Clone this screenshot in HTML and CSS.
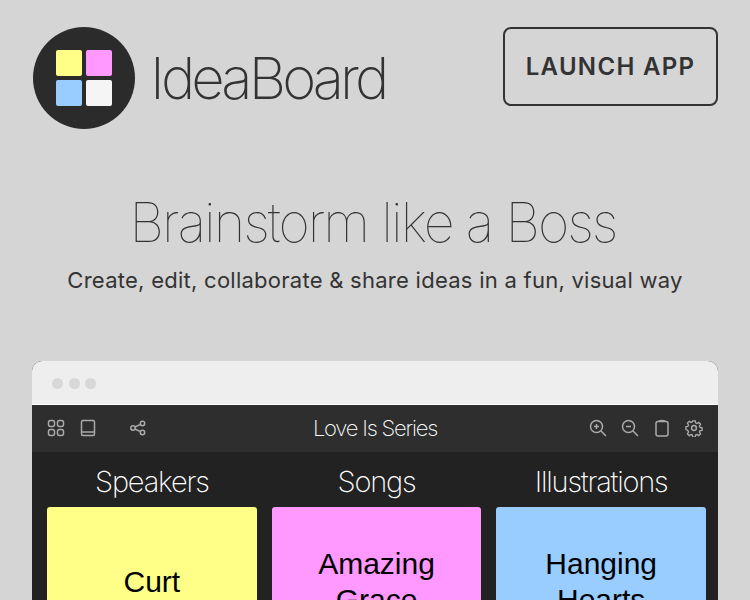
FILE: index.html
```html
<!DOCTYPE html>
<html lang="en">
<head>
  <meta charset="UTF-8" />
  <title>IdeaBoard</title>
  <link rel="stylesheet" href="styles.css">
</head>
<body>
  <header class="site-header">
    <div class="brand">
      <div class="logo">
        <div class="logo-grid">
          <span class="tile yellow"></span>
          <span class="tile pink"></span>
          <span class="tile blue"></span>
          <span class="tile white"></span>
        </div>
      </div>
      <span class="brand-name">IdeaBoard</span>
    </div>
    <a class="launch-btn">LAUNCH APP</a>
  </header>

  <section class="hero">
    <h1>Brainstorm like a Boss</h1>
    <p>Create, edit, collaborate &amp; share ideas in a fun, visual way</p>
  </section>

  <div class="browser">
    <div class="browser-bar">
      <span class="dot"></span>
      <span class="dot"></span>
      <span class="dot"></span>
    </div>

    <div class="toolbar">
      <div class="tools-left">
        <svg class="icon" viewBox="0 0 18 18"><rect x="1.5" y="1.5" width="6" height="6" rx="2"/><rect x="10.5" y="1.5" width="6" height="6" rx="2"/><rect x="1.5" y="10.5" width="6" height="6" rx="2"/><rect x="10.5" y="10.5" width="6" height="6" rx="2"/></svg>
        <svg class="icon" viewBox="0 0 18 18"><rect x="2.5" y="1.5" width="13" height="15" rx="1.5"/><path d="M2.5 13h13"/></svg>
        <svg class="icon share" viewBox="0 0 18 18"><circle cx="4" cy="9" r="2.2"/><circle cx="13.5" cy="4.5" r="2.2"/><circle cx="13.5" cy="13.5" r="2.2"/><path d="M6 8l5.5-2.6M6 10l5.5 2.6"/></svg>
      </div>
      <div class="board-title">Love Is Series</div>
      <div class="tools-right">
        <svg class="icon" viewBox="0 0 18 18"><circle cx="7.5" cy="7.5" r="6"/><path d="M12 12l5 5M5 7.5h5M7.5 5v5"/></svg>
        <svg class="icon" viewBox="0 0 18 18"><circle cx="7.5" cy="7.5" r="6"/><path d="M12 12l5 5M5 7.5h5"/></svg>
        <svg class="icon" viewBox="0 0 18 18"><rect x="3" y="2.5" width="12" height="14.5" rx="2"/><path d="M6 2.5c0-1.5 6-1.5 6 0"/></svg>
        <svg class="icon" viewBox="0 0 18 18"><circle cx="9" cy="9" r="2.4"/><path d="M7.6 1h2.8l.4 2.3 1.5.7 2-1.2 2 2-1.2 2 .6 1.5 2.3.5v2.8l-2.3.4-.6 1.5 1.2 2-2 2-2-1.2-1.5.6-.4 2.3H7.6l-.4-2.3-1.5-.6-2 1.2-2-2 1.2-2-.6-1.5L0 10.4V7.6l2.3-.5.6-1.5-1.2-2 2-2 2 1.2 1.5-.7z" transform="translate(.9 .9) scale(.9)"/></svg>
      </div>
    </div>

    <div class="board">
      <div class="column">
        <h2>Speakers</h2>
        <div class="card yellow"><span>Curt</span></div>
      </div>
      <div class="column">
        <h2>Songs</h2>
        <div class="card pink"><span>Amazing Grace</span></div>
      </div>
      <div class="column">
        <h2>Illustrations</h2>
        <div class="card blue"><span>Hanging Hearts</span></div>
      </div>
    </div>
  </div>
</body>
</html>
```

FILE: styles.css
```css
* {
  box-sizing: border-box;
}

html, body {
  height: 600px;
  overflow: hidden;
}

body {
  margin: 0;
  background-color: #d5d5d5;
  color: #333;
  font-family: 'Inter', 'Liberation Sans', sans-serif;
}

.site-header {
  display: flex;
  justify-content: space-between;
  align-items: flex-start;
  padding: 27px 32px 0 33px;
}

.brand {
  display: flex;
  align-items: center;
  gap: 15px;
}

.logo {
  width: 102px;
  height: 102px;
  border-radius: 50%;
  background-color: #2b2b2b;
  display: flex;
  justify-content: center;
  align-items: center;
}

.logo-grid {
  display: grid;
  grid-template-columns: 26px 26px;
  gap: 4px;
}

.tile {
  height: 26px;
  border-radius: 2px;
}

.yellow { background-color: #ffff88; }
.pink { background-color: #ff99ff; }
.blue { background-color: #99ccff; }
.white { background-color: #f5f5f5; }

.brand-name {
  font-size: 58px;
  font-weight: 200;
  letter-spacing: -3.9px;
  color: #333;
}

.launch-btn {
  width: 215px;
  height: 79px;
  border: 2px solid #333;
  border-radius: 8px;
  display: flex;
  justify-content: center;
  align-items: center;
  font-size: 24px;
  font-weight: 600;
  letter-spacing: 1.3px;
}

.hero {
  text-align: center;
  margin-top: 58px;
}

.hero h1 {
  margin: 0;
  padding-right: 4px;
  font-size: 54px;
  font-weight: 100;
  line-height: 72px;
  letter-spacing: -2px;
}

.hero p {
  margin: 5px 0 0;
  font-size: 22px;
  line-height: 32px;
  letter-spacing: 0.26px;
}

.browser {
  margin: 65px 32px 0;
  background-color: #222;
  border-radius: 10px 10px 0 0;
  overflow: hidden;
}

.browser-bar {
  height: 44px;
  background-color: #eee;
  border-bottom: 1px solid #fff;
  display: flex;
  align-items: center;
  gap: 5.7px;
  padding: 2px 20px 0;
}

.dot {
  width: 11px;
  height: 11px;
  border-radius: 50%;
  background-color: #d8d8d8;
}

.toolbar {
  height: 47px;
  background-color: #2e2e2e;
  display: flex;
  justify-content: space-between;
  align-items: center;
  padding: 0 15px 2px;
  position: relative;
}

.tools-left, .tools-right {
  display: flex;
  align-items: center;
  gap: 14px;
}

.icon {
  width: 18px;
  height: 18px;
  fill: none;
  stroke: #aaa;
  stroke-width: 1.5;
}

.share {
  margin-left: 18px;
}

.board-title {
  position: absolute;
  left: 0;
  right: 0;
  text-align: center;
  color: #fff;
  font-size: 22px;
  font-weight: 200;
  letter-spacing: -1.2px;
}

.board {
  display: grid;
  grid-template-columns: repeat(3, 1fr);
  gap: 15px;
  padding: 0 12px 0 15px;
}

.column h2 {
  margin: 0;
  height: 55px;
  line-height: 60px;
  text-align: center;
  color: #fff;
  font-size: 29px;
  font-weight: 200;
  letter-spacing: -1.2px;
}

.card {
  height: 150px;
  border-radius: 3px;
  padding: 0 40px;
  display: flex;
  justify-content: center;
  align-items: center;
  text-align: center;
  color: #000;
  font-family: 'Liberation Sans', sans-serif;
  font-size: 30px;
  line-height: 36px;
}
```
